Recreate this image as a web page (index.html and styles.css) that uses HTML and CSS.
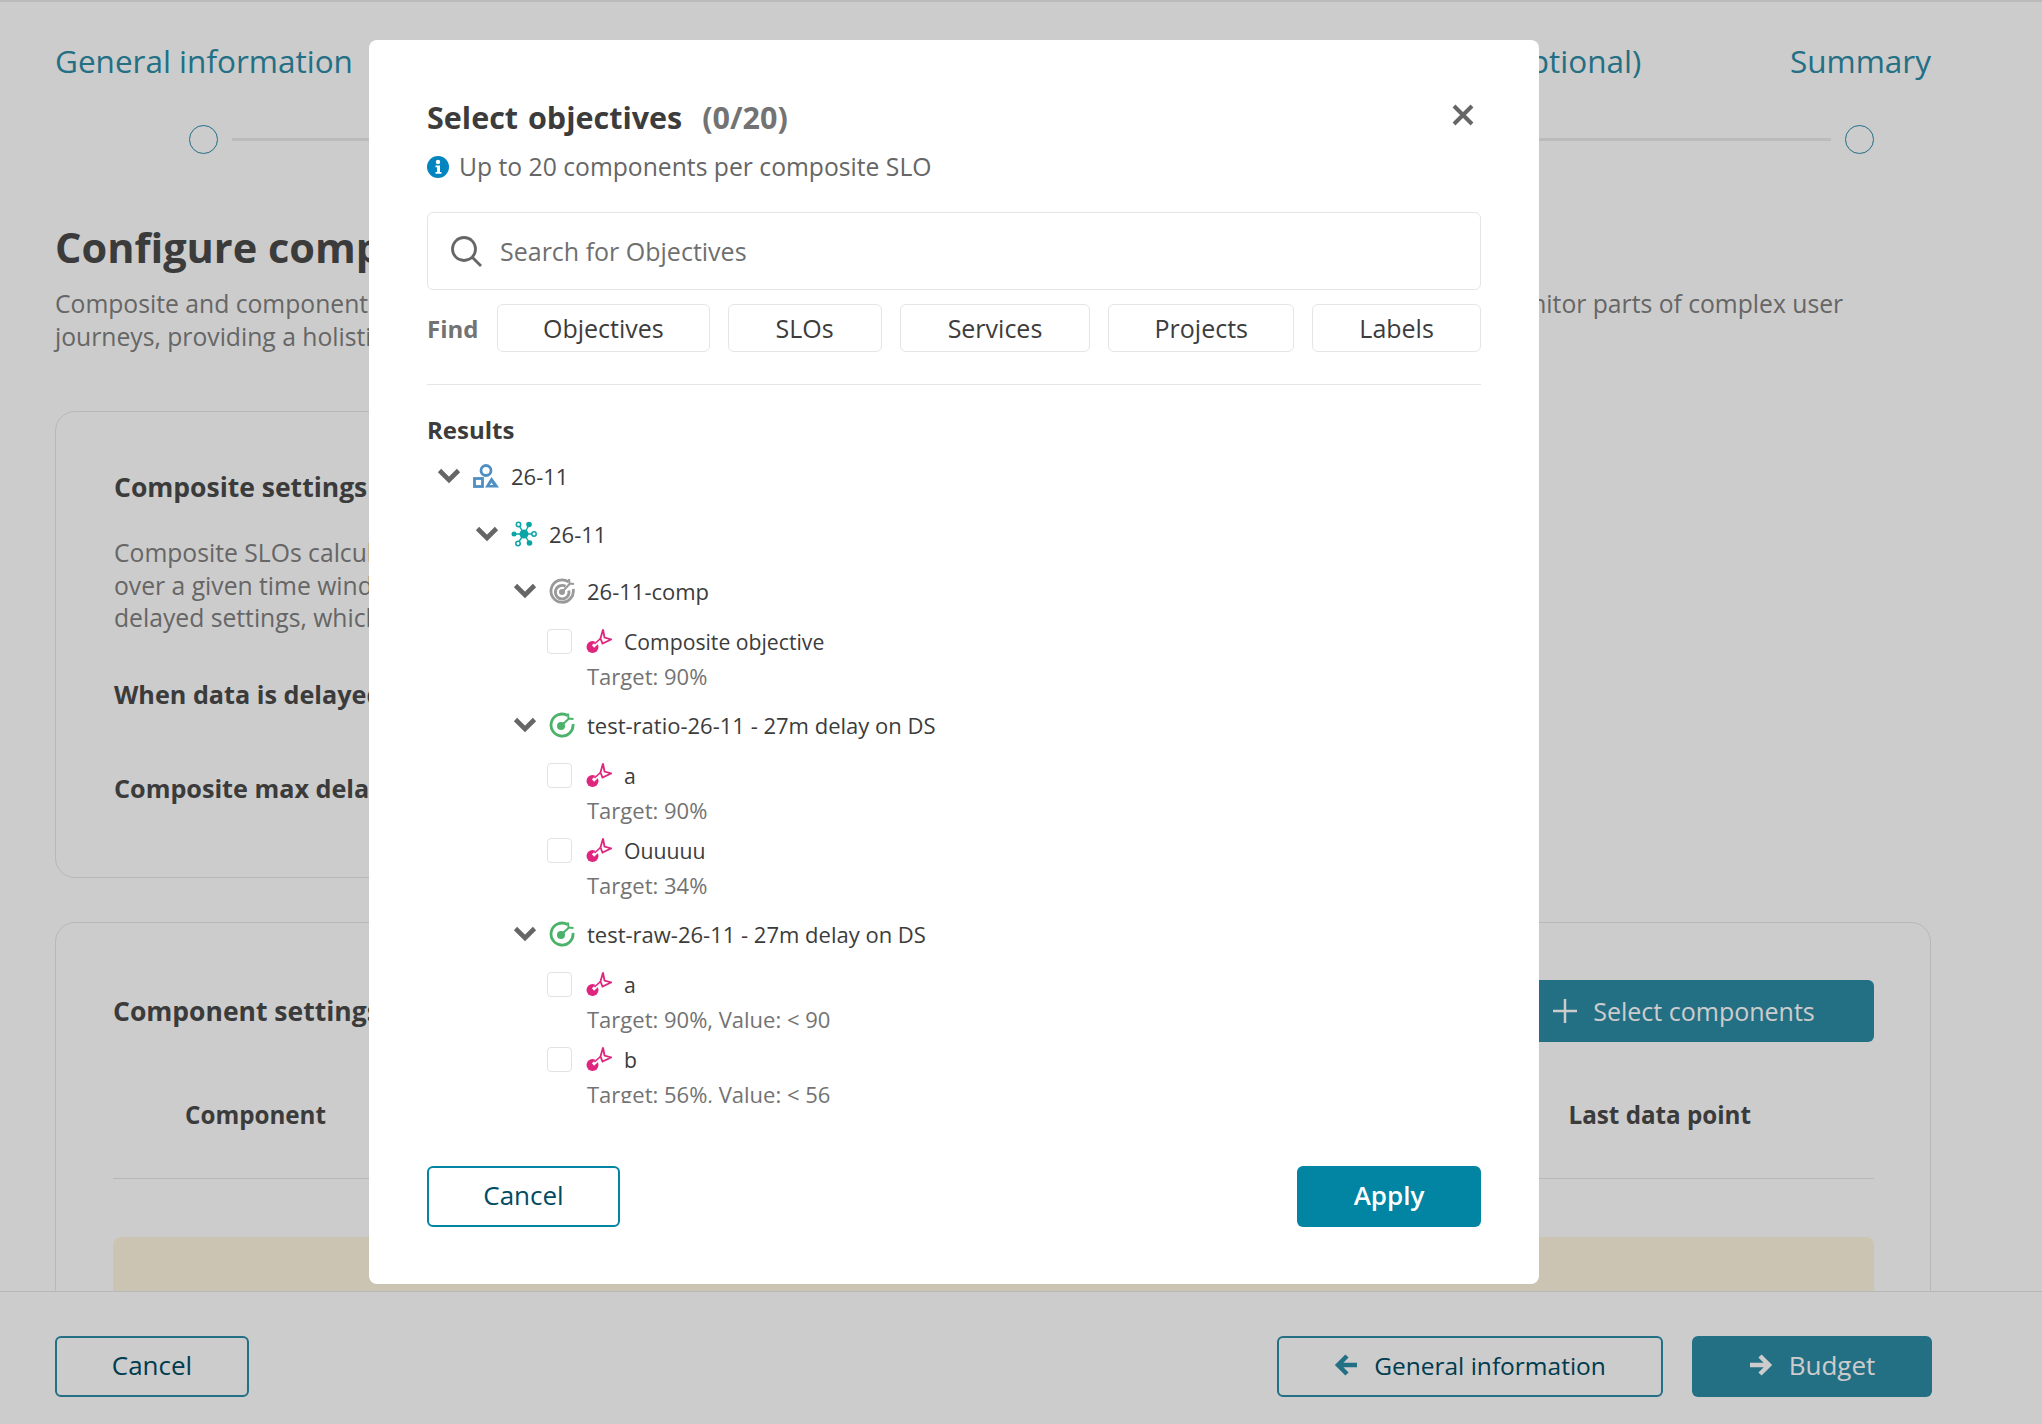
FILE: index.html
```html
<!DOCTYPE html>
<html lang="en">
<head>
<meta charset="utf-8">
<title>Configure components</title>
<link rel="stylesheet" href="styles.css">
</head>
<body>
<svg class="defs" width="0" height="0" aria-hidden="true">
  <symbol id="chev" viewBox="0 0 24 16"><path d="M2.500 2.500l9.500 9.500 9.500-9.500" fill="none" stroke="#666" stroke-width="4.600"/></symbol>
  <symbol id="project" viewBox="0 0 26 24"><g fill="none" stroke="#4f8fc4" stroke-width="2.800"><circle cx="13" cy="6.500" r="5"/><rect x="1.500" y="14.500" width="8" height="8"/></g><path d="M18.500 13L26 23.500H12z" fill="#4f8fc4"/><path d="M18.500 18.500l-1.600 2.500h3.200z" fill="#fff"/></symbol>
  <symbol id="service" viewBox="0 0 26 26"><g stroke="#0ba5a5" stroke-width="1.400" fill="none"><path d="M3 13h20M13 13L7.500 3.500M13 13l5-9M13 13l-6 9M13 13l5.500 9"/></g><g fill="#0ba5a5"><circle cx="13" cy="13" r="4.500"/><circle cx="3" cy="13" r="2.500"/><circle cx="18" cy="3.500" r="2.800"/><circle cx="18.500" cy="22" r="2.800"/></g><g fill="#fff" stroke="#0ba5a5" stroke-width="1.500"><circle cx="7.500" cy="3.500" r="2.200"/><circle cx="23" cy="13" r="2.200"/><circle cx="7" cy="22.500" r="2.200"/></g></symbol>
  <symbol id="target-gray" viewBox="0 0 26 26"><g fill="none" stroke="#999" stroke-width="2.800"><path d="M19.500 3.800A11.200 11.200 0 1 0 24.200 11"/><path d="M16.500 8.200A6.800 6.800 0 1 0 19.800 12.500"/></g><circle cx="13" cy="14" r="3" fill="#999"/><path d="M14 13L21 5.500M20 1l.5 4.500 4.500.5" fill="none" stroke="#999" stroke-width="2"/></symbol>
  <symbol id="target-green" viewBox="0 0 26 26"><path d="M18.500 3.500A11 11 0 1 0 24 12" fill="none" stroke="#4bb26a" stroke-width="2.800"/><circle cx="12" cy="14" r="4" fill="#4bb26a"/><path d="M13 13l7-6.500M19 1.500l.5 5 5 .5" fill="none" stroke="#4bb26a" stroke-width="2"/></symbol>
  <symbol id="slo" viewBox="0 0 26 26"><circle cx="6.500" cy="19" r="6" fill="#e0257f"/><path d="M7 18.500l8-7.500" stroke="#fff" stroke-width="3.200"/><path d="M8.500 16l6-5.500" stroke="#e0257f" stroke-width="1.600"/><path d="M17 1.500L14.500 10.500 16.500 15.500 25 11.500 18.500 9.500z" fill="#fff" stroke="#e0257f" stroke-width="1.800"/></symbol>
</svg>

<div class="page">
  <main class="main">
    <div class="step-labels">
      <span>General information</span>
      <span>Configure components</span>
      <span>Budget</span>
      <span>Alert policy setup (optional)</span>
      <span>Summary</span>
    </div>
    <div class="step-track">
      <span class="step-dot"></span>
      <span class="step-line"></span>
      <span class="step-dot"></span>
    </div>
    <h1 class="page-title">Configure components</h1>
    <p class="page-desc">Composite and component objectives help you track the overall reliability of a service and all of its dependencies, and also to monitor parts of complex user<br>journeys, providing a holistic view of reliability.</p>

    <section class="card card-short">
      <h2 class="card-title">Composite settings</h2>
      <p class="card-text">Composite SLOs calculate a combined reliability score<br>over a given time window. Configure the data<br>delayed settings, which apply to all components.</p>
      <div class="strong-a">When data is delayed</div>
      <div class="strong-b">Composite max delay</div>
    </section>

    <section class="card card-wide">
      <div class="card-head">
        <h2 class="card-title">Component settings</h2>
        <button class="btn btn-solid btn-select" type="button">
          <svg class="i-plus" viewBox="0 0 24 24"><path d="M12 0v24M0 12h24" stroke="#fff" stroke-width="2.500" fill="none"/></svg>
          Select components
        </button>
      </div>
      <div class="table-head"><span>Component</span><span>Last data point</span></div>
      <div class="notice"></div>
    </section>
  </main>

  <footer class="footer">
    <button class="btn btn-outline btn-cancel" type="button">Cancel</button>
    <div class="footer-right">
      <button class="btn btn-outline btn-prev" type="button">
        <svg class="i-arrow" viewBox="0 0 24 24"><path d="M23 12H5M13 3l-9 9 9 9" fill="none" stroke="#2c8ba6" stroke-width="4.500"/></svg>
        General information
      </button>
      <button class="btn btn-solid btn-next" type="button">
        <svg class="i-arrow" viewBox="0 0 24 24"><path d="M1 12h18M11 3l9 9-9 9" fill="none" stroke="#fff" stroke-width="4.500"/></svg>
        Budget
      </button>
    </div>
  </footer>
</div>

<div class="overlay"></div>

<div class="modal">
  <div class="modal-head">
    <h2 class="modal-title">Select objectives <span class="count">(0/20)</span></h2>
    <svg class="i-close" viewBox="0 0 22 22"><path d="M2 2l18 18M20 2L2 20" stroke="#666" stroke-width="4" fill="none"/></svg>
  </div>
  <div class="info">
    <svg class="i-info" viewBox="0 0 22 22"><circle cx="11" cy="11" r="11" fill="#0284c0"/><circle cx="11" cy="6" r="2.200" fill="#fff"/><path d="M8.500 9.500H13v6.500h1.500v1.800h-6V16H10v-4.700H8.500z" fill="#fff"/></svg>
    Up to 20 components per composite SLO
  </div>
  <div class="search">
    <svg class="i-search" viewBox="0 0 32 32"><circle cx="14" cy="14" r="11.500" fill="none" stroke="#666" stroke-width="2.800"/><path d="M22.500 22.500L31 31" stroke="#666" stroke-width="2.800"/></svg>
    <span>Search for Objectives</span>
  </div>
  <div class="find">
    <span class="find-label">Find</span>
    <button class="chip chip-a" type="button">Objectives</button>
    <button class="chip chip-b" type="button">SLOs</button>
    <button class="chip chip-c" type="button">Services</button>
    <button class="chip chip-d" type="button">Projects</button>
    <button class="chip chip-e" type="button">Labels</button>
  </div>
  <hr class="rule">
  <h3 class="results">Results</h3>
  <div class="tree">
    <div class="row lvl0"><svg class="chev"><use href="#chev"/></svg><svg class="ico"><use href="#project"/></svg>26-11</div>
    <div class="row lvl1"><svg class="chev"><use href="#chev"/></svg><svg class="ico"><use href="#service"/></svg>26-11</div>
    <div class="row lvl2"><svg class="chev"><use href="#chev"/></svg><svg class="ico"><use href="#target-gray"/></svg>26-11-comp</div>
    <div class="leaves">
      <div class="leaf"><div class="row leaf-row"><span class="check"></span><svg class="ico"><use href="#slo"/></svg>Composite objective</div><div class="meta">Target: 90%</div></div>
    </div>
    <div class="row lvl2 obj"><svg class="chev"><use href="#chev"/></svg><svg class="ico"><use href="#target-green"/></svg>test-ratio-26-11 - 27m delay on DS</div>
    <div class="leaves">
      <div class="leaf"><div class="row leaf-row"><span class="check"></span><svg class="ico"><use href="#slo"/></svg>a</div><div class="meta">Target: 90%</div></div>
      <div class="leaf"><div class="row leaf-row"><span class="check"></span><svg class="ico"><use href="#slo"/></svg>Ouuuuu</div><div class="meta">Target: 34%</div></div>
    </div>
    <div class="row lvl2 obj"><svg class="chev"><use href="#chev"/></svg><svg class="ico"><use href="#target-green"/></svg>test-raw-26-11 - 27m delay on DS</div>
    <div class="leaves">
      <div class="leaf"><div class="row leaf-row"><span class="check"></span><svg class="ico"><use href="#slo"/></svg>a</div><div class="meta">Target: 90%, Value: &lt; 90</div></div>
      <div class="leaf"><div class="row leaf-row"><span class="check"></span><svg class="ico"><use href="#slo"/></svg>b</div><div class="meta">Target: 56%, Value: &lt; 56</div></div>
    </div>
  </div>
  <div class="modal-foot">
    <button class="btn btn-outline btn-m-cancel" type="button">Cancel</button>
    <button class="btn btn-apply" type="button">Apply</button>
  </div>
</div>
</body>
</html>
```
FILE: styles.css
```css
* { box-sizing: border-box; }
html, body { margin: 0; height: 100%; }
body { font-family: "Open Sans", "Noto Sans", sans-serif; color: #3c3c3c; background: #fff; overflow: hidden; }
.defs { position: absolute; }
h1, h2, h3, p { margin: 0; }
button { font-family: inherit; cursor: pointer; }

.page { height: 1424px; display: flex; flex-direction: column; border-top: 2px solid #eaeaea; }
.main { flex: 1; min-height: 0; overflow: hidden; padding: 38px 111px 0 55px; color: #4a4a4a; }

.step-labels { display: flex; justify-content: space-between; height: 42px; line-height: 42px; font-size: 31.500px; color: #2c8ba6; white-space: nowrap; }
.step-track { display: flex; align-items: center; gap: 14px; margin: 43px 0 0; padding: 0 57px 0 134px; }
.step-dot { width: 29px; height: 29px; border: 1.500px solid #2c8ba6; border-radius: 50%; flex: none; }
.step-line { flex: 1; height: 3px; background: #eaeaea; }

.page-title { margin-top: 65px; font-size: 41.500px; line-height: 56px; font-weight: 700; white-space: nowrap; }
.page-desc { margin-top: 13px; font-size: 24.700px; line-height: 32.500px; color: #808080; white-space: nowrap; }

.card { border: 1px solid #e6e6e6; border-radius: 20px; }
.card-short { margin-top: 58px; width: 1200px; height: 467px; padding: 56px 58px 0; }
.card-wide { margin-top: 44px; padding: 57px 56px 0 57px; height: 600px; }
.card-title { font-size: 26.500px; line-height: 38px; font-weight: 700; white-space: nowrap; }
.card-text { margin-top: 31px; font-size: 24.700px; line-height: 32.500px; color: #808080; white-space: nowrap; }
.strong-a, .strong-b { font-size: 25.200px; line-height: 38px; font-weight: 700; white-space: nowrap; }
.strong-a { margin-top: 40px; }
.strong-b { margin-top: 56px; }
.card-head { display: flex; justify-content: space-between; align-items: center; }
.table-head { margin-top: 55px; height: 82px; padding: 0 123px 45px 72px; border-bottom: 1px solid #e6e6e6; display: flex; justify-content: space-between; font-size: 24.200px; line-height: 36px; font-weight: 700; }
.notice { margin-top: 58px; height: 120px; background: #fef6e0; border-radius: 8px; }

.footer { flex: none; height: 133px; border-top: 1px solid #e6e6e6; padding: 44px 110px 0 55px; display: flex; justify-content: space-between; align-items: flex-start; }
.footer-right { display: flex; gap: 29px; }

.btn { height: 61px; padding: 0 0 3px; border-radius: 6px; font-size: 26px; display: inline-flex; align-items: center; justify-content: center; gap: 16px; white-space: nowrap; }
.btn-solid { background: #2c8ba6; border: 0; color: #fff; }
.btn-outline { background: #fff; border: 2px solid #2c8ba6; color: #004b63; }
.btn-select { width: 380px; height: 62px; padding: 0; font-size: 25px; }
.btn-cancel { width: 194px; }
.btn-m-cancel { width: 193px; border-color: #0284a3; }
.btn-prev { width: 386px; font-size: 24.500px; }
.btn-next { width: 240px; }
.btn-apply { width: 184px; background: #0284a3; border: 0; color: #fff; font-weight: 600; }
.i-plus { width: 24px; height: 24px; }
.i-arrow { width: 24px; height: 24px; }

.overlay { position: fixed; inset: 0; background: rgba(0, 0, 0, .2); }

.modal { position: absolute; left: 369px; top: 40px; width: 1170px; height: 1244px; background: #fff; border-radius: 8px; padding: 58px 58px 57px; display: flex; flex-direction: column; }
.modal-head { height: 40px; display: flex; justify-content: space-between; align-items: center; }
.modal-title { font-size: 30.500px; line-height: 38px; padding-bottom: 2px; font-weight: 700; color: #3c3c3c; word-spacing: 2px; }
.count { color: #737373; margin-left: 10px; }
.i-close { width: 22px; height: 22px; margin: -6px 7px 0 0; }
.info { margin-top: 8px; height: 40px; display: flex; align-items: center; gap: 10px; font-size: 24.700px; color: #666; }
.i-info { width: 22px; height: 22px; margin-top: 2px; }
.search { margin-top: 26px; height: 78px; border: 1px solid #e5e5e5; border-radius: 6px; display: flex; align-items: center; padding-left: 22px; gap: 18px; font-size: 25px; color: #6f6f6f; }
.i-search { width: 32px; height: 32px; }
.find { margin-top: 14px; height: 48px; display: flex; align-items: center; gap: 18px; }
.find-label { font-size: 24px; font-weight: 700; color: #737373; width: 52px; }
.chip { height: 48px; border: 1px solid #e5e5e5; border-radius: 6px; background: #fff; font-size: 25px; color: #3c3c3c; padding: 0; }
.chip-a { width: 213px; }
.chip-b { width: 154px; }
.chip-c { width: 191px; }
.chip-d { width: 186px; }
.chip-e { width: 169px; }
.rule { margin: 32px 0 0; border: 0; border-top: 1px solid #e5e5e5; }
.results { margin-top: 28px; font-size: 24px; line-height: 34px; font-weight: 700; color: #3c3c3c; }

.tree { margin-top: 11px; height: 645px; overflow: hidden; font-size: 22px; }
.row { height: 36px; display: flex; align-items: center; white-space: nowrap; color: #3c3c3c; }
.leaf-row { font-size: 21.200px; }
.lvl0 { padding-left: 10px; }
.lvl1 { padding-left: 48px; margin-top: 22px; }
.lvl2 { padding-left: 86px; margin-top: 21px; }
.lvl2.obj { margin-top: 14px; }
.chev { width: 24px; height: 16px; flex: none; margin-right: 12px; }
.ico { width: 26px; height: 26px; flex: none; margin-right: 12px; }
.leaves { margin-top: 14px; padding-left: 120px; display: flex; flex-direction: column; gap: 5px; }
.check { width: 25px; height: 25px; border: 1px solid #e2e2e2; border-radius: 4px; margin-right: 14px; flex: none; }
.meta { padding-left: 40px; height: 34px; line-height: 34px; color: #737373; white-space: nowrap; }

.modal-foot { margin-top: 63px; display: flex; justify-content: space-between; }
```
